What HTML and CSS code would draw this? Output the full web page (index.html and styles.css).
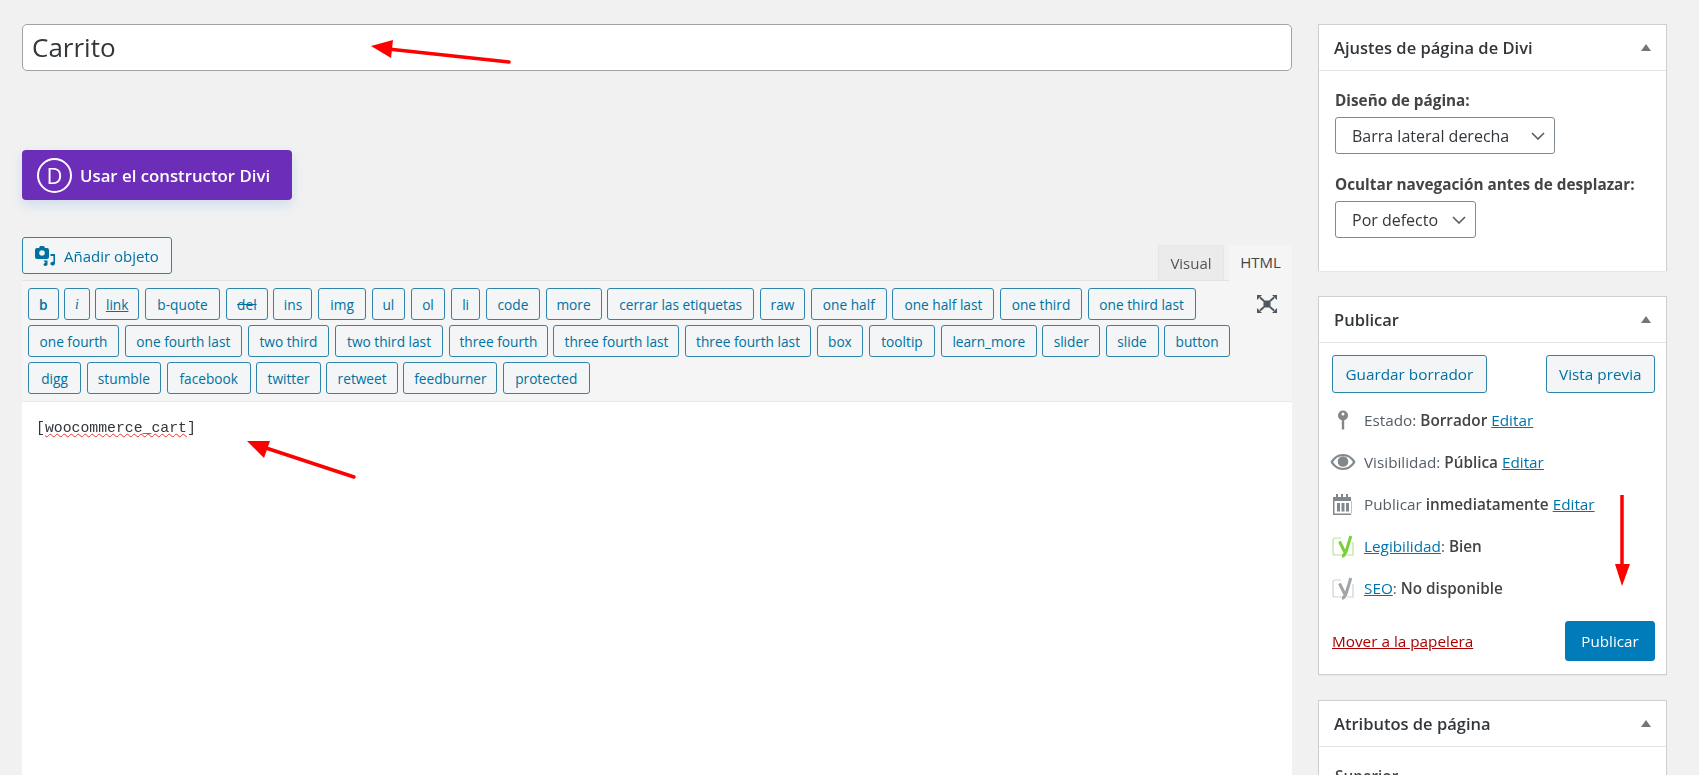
FILE: index.html
```html
<!DOCTYPE html>
<html lang="es">
<head>
<meta charset="utf-8">
<title>Carrito</title>
<link rel="stylesheet" href="styles.css">
</head>
<body>
<div class="page">
  <main class="main">
    <div class="title-input">Carrito</div>
    <button class="divi-btn">
      <span class="divi-logo">D</span>
      <span>Usar el constructor Divi</span>
    </button>
    <div class="editor-head">
      <button class="media-btn">
        <svg class="media-icon" viewBox="0 0 22 20" width="22" height="20"><path fill="#0071a1" d="M3 2h2l1-2h4l1 2h2a2 2 0 0 1 2 2v7a2 2 0 0 1-2 2H3a2 2 0 0 1-2-2V4a2 2 0 0 1 2-2z"/><circle cx="8" cy="7" r="2.800" fill="#f1f1f1"/><path fill="#0071a1" d="M16.500 8H21v9.200c0 1.400-1.300 2.300-2.600 2.300-1.200 0-2-.7-2-1.700 0-1.200 1.100-2 2.300-2 .3 0 .5 0 .7.100V10h-2.900z"/><path fill="#0071a1" d="M9.500 14.500h4v3.800c0 1-.9 1.700-2 1.700s-2-.6-2-1.500c0-1 .9-1.600 2-1.600z"/></svg>
        <span>Añadir objeto</span>
      </button>
      <div class="tabs">
        <span class="tab tab-visual">Visual</span>
        <span class="tab tab-html">HTML</span>
      </div>
    </div>
    <section class="editor">
      <div class="toolbar">
        <div class="qt-row">
          <button class="qt qt-b">b</button><button class="qt qt-i">i</button><button class="qt qt-u">link</button><button class="qt">b-quote</button><button class="qt qt-s">del</button><button class="qt">ins</button><button class="qt">img</button><button class="qt">ul</button><button class="qt">ol</button><button class="qt">li</button><button class="qt">code</button><button class="qt">more</button><button class="qt">cerrar las etiquetas</button><button class="qt">raw</button><button class="qt">one half</button><button class="qt">one half last</button><button class="qt">one third</button><button class="qt">one third last</button>
        </div>
        <div class="qt-row">
          <button class="qt">one fourth</button><button class="qt">one fourth last</button><button class="qt">two third</button><button class="qt">two third last</button><button class="qt">three fourth</button><button class="qt">three fourth last</button><button class="qt">three fourth last</button><button class="qt">box</button><button class="qt">tooltip</button><button class="qt">learn_more</button><button class="qt">slider</button><button class="qt">slide</button><button class="qt">button</button>
        </div>
        <div class="qt-row">
          <button class="qt">digg</button><button class="qt">stumble</button><button class="qt">facebook</button><button class="qt">twitter</button><button class="qt">retweet</button><button class="qt">feedburner</button><button class="qt">protected</button>
        </div>
        <svg class="fullscreen" viewBox="0 0 20 18" width="20" height="18"><rect x="6.500" y="5.500" width="7" height="7" fill="#50575e"/><path fill="none" stroke="#50575e" stroke-width="2" d="M7 6 3 2.500M13 6l4-3.500M7 12l-4 3.500M13 12l4 3.500"/><path fill="#50575e" d="M0 0h5L0 5zM20 0h-5l5 5zM0 18h5L0 13zM20 18h-5l5-5z"/></svg>
      </div>
      <div class="editor-body"><span class="code">[<span class="misspelled">woocommerce_cart</span>]</span></div>
    </section>
  </main>

  <aside class="sidebar">
    <section class="box box-divi">
      <header class="box-head"><h2>Ajustes de página de Divi</h2><span class="toggle"></span></header>
      <div class="box-body">
        <p class="field-label">Diseño de página:</p>
        <div class="select select-wide"><span>Barra lateral derecha</span><svg viewBox="0 0 14 8" width="14" height="8"><path fill="none" stroke="#555d66" stroke-width="1.600" d="M1 1l6 6 6-6"/></svg></div>
        <p class="field-label field-label-2">Ocultar navegación antes de desplazar:</p>
        <div class="select select-narrow"><span>Por defecto</span><svg viewBox="0 0 14 8" width="14" height="8"><path fill="none" stroke="#555d66" stroke-width="1.600" d="M1 1l6 6 6-6"/></svg></div>
      </div>
    </section>

    <section class="box box-publish">
      <header class="box-head"><h2>Publicar</h2><span class="toggle"></span></header>
      <div class="publish-actions">
        <button class="wp-btn">Guardar borrador</button>
        <button class="wp-btn">Vista previa</button>
      </div>
      <ul class="misc">
        <li><span class="misc-icon"><svg viewBox="0 0 12 20" width="12" height="20"><circle cx="6" cy="5.500" r="5" fill="#82878c"/><circle cx="6" cy="4" r="1.500" fill="#fff"/><rect x="4.800" y="9" width="2.400" height="10.500" fill="#82878c"/></svg></span><span>Estado: <b>Borrador</b> <a>Editar</a></span></li>
        <li><span class="misc-icon"><svg viewBox="0 0 26 16" width="26" height="16"><path fill="#82878c" d="M13 0c5.500 0 10 3.300 12.500 8C23 12.700 18.500 16 13 16S3 12.700.5 8C3 3.300 7.500 0 13 0z"/><path fill="#fff" d="M13 2C9 2 5.500 4.300 3 8c2.500 3.700 6 6 10 6s7.500-2.300 10-6c-2.500-3.700-6-6-10-6z"/><circle cx="13" cy="7.500" r="5.300" fill="#82878c"/></svg></span><span>Visibilidad: <b>Pública</b> <a>Editar</a></span></li>
        <li><span class="misc-icon"><svg viewBox="0 0 20 21" width="20" height="21"><path fill="#82878c" d="M0 3h3V0h2v3h3V0h2v3h3V0h2v3h3v18H0zM1.500 7v12.500h17V7z"/><path fill="#82878c" d="M4 9h3v8.500H4zM8.500 9h3v8.500h-3zM13 9h3v8.500h-3z"/></svg></span><span>Publicar <b>inmediatamente</b> <a>Editar</a></span></li>
        <li><span class="misc-icon"><svg viewBox="0 0 22 23" width="22" height="23"><path fill="none" stroke="#b6e39a" stroke-width="1.200" d="M9 3H3a2 2 0 0 0-2 2v13a2 2 0 0 0 2 2h6M15 20h6V7"/><path fill="none" stroke="#7ad03a" stroke-width="3" d="M7.500 6.500l5.200 10.500M18.800 1 14.300 16c-.8 2.700-2 4.700-4.300 5.500"/></svg></span><span><a>Legibilidad</a>: <b class="semi">Bien</b></span></li>
        <li><span class="misc-icon"><svg viewBox="0 0 22 23" width="22" height="23"><path fill="none" stroke="#cfd1d3" stroke-width="1.200" d="M9 3H3a2 2 0 0 0-2 2v13a2 2 0 0 0 2 2h6M15 20h6V7"/><path fill="none" stroke="#a0a5aa" stroke-width="3" d="M7.500 6.500l5.200 10.500M18.800 1 14.300 16c-.8 2.700-2 4.700-4.300 5.500"/></svg></span><span><a>SEO</a>: <b class="semi">No disponible</b></span></li>
      </ul>
      <div class="publish-foot">
        <a class="trash">Mover a la papelera</a>
        <button class="primary-btn">Publicar</button>
      </div>
    </section>

    <section class="box box-attrs">
      <header class="box-head"><h2>Atributos de página</h2><span class="toggle"></span></header>
      <div class="box-body"><p class="field-label">Superior</p></div>
    </section>
  </aside>

  <svg class="arrows" viewBox="0 0 1699 775" width="1699" height="775">
    <g fill="#fd0000" stroke="#fd0000">
      <path fill="none" stroke-width="3.500" stroke-linecap="round" d="M509 62 388 49"/>
      <path stroke="none" d="M371 46 393 40 391 58z"/>
      <path fill="none" stroke-width="3.500" stroke-linecap="round" d="M354 477 263 447"/>
      <path stroke="none" d="M247 441 270 441 264 458z"/>
      <path fill="none" stroke-width="3.500" d="M1622 495V566"/>
      <path stroke="none" d="M1615 564H1630L1622 586z"/>
    </g>
  </svg>
</div>
</body>
</html>
```
FILE: styles.css
```css
* { box-sizing: border-box; }
html, body { margin: 0; height: 100%; }
body {
  background: #f1f1f1;
  color: #444;
  font-family: "Open Sans", "Noto Sans", "Liberation Sans", sans-serif;
  font-size: 13.6px;
  overflow: hidden;
}
button { font-family: inherit; cursor: pointer; margin: 0; }
p, h2, ul { margin: 0; padding: 0; }

.page {
  position: relative;
  display: flex;
  align-items: flex-start;
  width: 1699px;
  height: 775px;
  overflow: hidden;
  padding: 24px 32px 0 22px;
  gap: 26px;
  filter: blur(0.45px);
}

/* main column */
.main { width: 1270px; flex: none; }
.title-input {
  height: 47px;
  padding: 0 9px;
  background: #fff;
  border: 1px solid #9ea3a8;
  border-radius: 5px;
  font-size: 26px;
  line-height: 45px;
  color: #32373c;
}
.divi-btn {
  display: flex;
  align-items: center;
  gap: 8px;
  width: 270px;
  height: 50px;
  margin-top: 79px;
  padding: 0 15px;
  background: #6c2eb9;
  border: 0;
  border-radius: 4px;
  color: #fff;
  font-size: 16.8px;
  font-weight: 600;
  box-shadow: 0 5px 12px rgba(43, 135, 218, 0.18);
}
.divi-logo {
  width: 35px;
  height: 35px;
  flex: none;
  border: 2px solid #fff;
  border-radius: 50%;
  font-size: 22px;
  font-weight: 400;
  line-height: 30px;
  text-align: center;
}
.editor-head {
  display: flex;
  justify-content: space-between;
  align-items: flex-end;
  height: 80px;
}
.media-btn {
  display: flex;
  align-items: center;
  gap: 8px;
  width: 150px;
  height: 37px;
  margin-bottom: 6px;
  padding: 0 0 0 11px;
  background: #f3f5f6;
  border: 1px solid #2f84ab;
  border-radius: 3px;
  color: #0071a1;
  font-size: 15px;
  white-space: nowrap;
}
.media-icon { flex: none; }
.tabs { display: flex; gap: 5px; align-items: flex-end; }
.tab { display: block; height: 35px; text-align: center; line-height: 34px; font-size: 15px; }
.tab-visual { width: 66px; background: #ebebeb; color: #555; border: 1px solid #e5e5e5; border-bottom: 0; }
.tab-html { width: 63px; height: 36px; background: #f5f5f5; color: #444; margin-bottom: -1px; position: relative; }

.editor { border-top: 1px solid #e3e3e3; height: 500px; background: #fff; }
.toolbar {
  position: relative;
  height: 121px;
  padding: 7px 6px 0;
  background: #f5f5f5;
  border-bottom: 1px solid #e8e8e8;
}
.qt-row { display: flex; gap: 5.6px; margin-bottom: 5px; }
.qt {
  flex: none;
  height: 32px;
  padding: 2px 0 0;
  background: #f3f5f6;
  border: 1px solid #2f84ab;
  border-radius: 3px;
  color: #0071a1;
  font-size: 13.7px;
  line-height: 26px;
  text-align: center;
  white-space: nowrap;
}
.qt-b { font-weight: 600; }
.qt-i { font-style: italic; font-family: "Liberation Serif", serif; }
.qt-u { text-decoration: underline; }
.qt-s { text-decoration: line-through; }

.qt-row:nth-child(1) .qt:nth-child(1) { width: 30.5px; }
.qt-row:nth-child(1) .qt:nth-child(2) { width: 25.5px; }
.qt-row:nth-child(1) .qt:nth-child(3) { width: 44px; }
.qt-row:nth-child(1) .qt:nth-child(4) { width: 75.5px; }
.qt-row:nth-child(1) .qt:nth-child(5) { width: 42px; }
.qt-row:nth-child(1) .qt:nth-child(6) { width: 39px; }
.qt-row:nth-child(1) .qt:nth-child(7) { width: 48px; }
.qt-row:nth-child(1) .qt:nth-child(8) { width: 33.5px; }
.qt-row:nth-child(1) .qt:nth-child(9) { width: 34.5px; }
.qt-row:nth-child(1) .qt:nth-child(10) { width: 29.5px; }
.qt-row:nth-child(1) .qt:nth-child(11) { width: 54px; }
.qt-row:nth-child(1) .qt:nth-child(12) { width: 56px; }
.qt-row:nth-child(1) .qt:nth-child(13) { width: 147px; }
.qt-row:nth-child(1) .qt:nth-child(14) { width: 45.5px; }
.qt-row:nth-child(1) .qt:nth-child(15) { width: 76px; }
.qt-row:nth-child(1) .qt:nth-child(16) { width: 102px; }
.qt-row:nth-child(1) .qt:nth-child(17) { width: 82px; }
.qt-row:nth-child(1) .qt:nth-child(18) { width: 108px; }
.qt-row:nth-child(2) .qt:nth-child(1) { width: 91px; }
.qt-row:nth-child(2) .qt:nth-child(2) { width: 117.5px; }
.qt-row:nth-child(2) .qt:nth-child(3) { width: 81.5px; }
.qt-row:nth-child(2) .qt:nth-child(4) { width: 108.5px; }
.qt-row:nth-child(2) .qt:nth-child(5) { width: 99px; }
.qt-row:nth-child(2) .qt:nth-child(6) { width: 126px; }
.qt-row:nth-child(2) .qt:nth-child(7) { width: 126px; }
.qt-row:nth-child(2) .qt:nth-child(8) { width: 46.5px; }
.qt-row:nth-child(2) .qt:nth-child(9) { width: 66.5px; }
.qt-row:nth-child(2) .qt:nth-child(10) { width: 96px; }
.qt-row:nth-child(2) .qt:nth-child(11) { width: 57.5px; }
.qt-row:nth-child(2) .qt:nth-child(12) { width: 53px; }
.qt-row:nth-child(2) .qt:nth-child(13) { width: 66px; }
.qt-row:nth-child(3) .qt:nth-child(1) { width: 53px; }
.qt-row:nth-child(3) .qt:nth-child(2) { width: 74.5px; }
.qt-row:nth-child(3) .qt:nth-child(3) { width: 84px; }
.qt-row:nth-child(3) .qt:nth-child(4) { width: 64.5px; }
.qt-row:nth-child(3) .qt:nth-child(5) { width: 71.5px; }
.qt-row:nth-child(3) .qt:nth-child(6) { width: 94px; }
.qt-row:nth-child(3) .qt:nth-child(7) { width: 86.5px; }

.fullscreen { position: absolute; top: 14px; right: 15px; }
.editor-body { padding: 15px 14px; }
.code { font-family: "Liberation Mono", monospace; font-size: 14.8px; color: #32373c; line-height: 18px; }
.misspelled { text-decoration: underline wavy #e33; text-decoration-thickness: 1px; }

/* sidebar */
.sidebar { width: 349px; flex: none; display: flex; flex-direction: column; gap: 25px; }
.box { background: #fff; border: 1px solid #ccd0d4; box-shadow: 0 1px 1px rgba(0,0,0,.04); }
.box-head {
  display: flex;
  justify-content: space-between;
  align-items: center;
  height: 46px;
  padding: 0 15px;
  border-bottom: 1px solid #e2e4e7;
}
.box-head h2 { font-size: 16.5px; font-weight: 600; color: #32373c; }
.toggle {
  width: 0;
  height: 0;
  border-left: 5.5px solid transparent;
  border-right: 5.5px solid transparent;
  border-bottom: 7px solid #72777c;
}
.box-divi { height: 247px; border-bottom: 0; }
.box-body { padding: 20px 16px 0; }
.field-label { font-size: 15.3px; font-weight: 700; color: #444; line-height: 18px; }
.field-label-2 { margin-top: 21px; }
.select {
  display: flex;
  align-items: center;
  justify-content: space-between;
  height: 37px;
  margin-top: 8px;
  padding: 0 9px 0 16px;
  border: 1px solid #7e8993;
  border-radius: 3px;
  background: #fff;
  color: #32373c;
  font-size: 16px;
}
.select-wide { width: 220px; }
.select-narrow { width: 141px; }

.box-publish { height: 379px; }
.publish-actions { display: flex; justify-content: space-between; padding: 12px 11px 0 13px; }
.wp-btn {
  height: 38px;
  padding: 0 12.5px;
  background: #f3f5f6;
  border: 1px solid #2f84ab;
  border-radius: 3px;
  color: #0071a1;
  font-size: 15.3px;
}
.misc { list-style: none; padding: 6px 0 0 10px; }
.misc li { display: flex; align-items: center; height: 42px; font-size: 15.3px; color: #555d66; }
.misc-icon { display: flex; justify-content: center; width: 27px; margin-right: 8px; flex: none; }
.misc b { font-weight: 600; color: #444; }
.misc a, .trash { text-decoration: underline; color: #0073aa; }
.publish-foot { display: flex; justify-content: space-between; align-items: center; padding: 12px 11px 0 13px; }
.trash { color: #a00; font-size: 15.3px; }
.primary-btn {
  width: 90px;
  height: 40px;
  background: #007cba;
  border: 1px solid #007cba;
  border-radius: 3px;
  color: #fff;
  font-size: 15.2px;
}
.box-attrs { height: 100px; }
.box-attrs .field-label { font-weight: 600; }

.arrows { position: absolute; left: 0; top: 0; pointer-events: none; }
```
